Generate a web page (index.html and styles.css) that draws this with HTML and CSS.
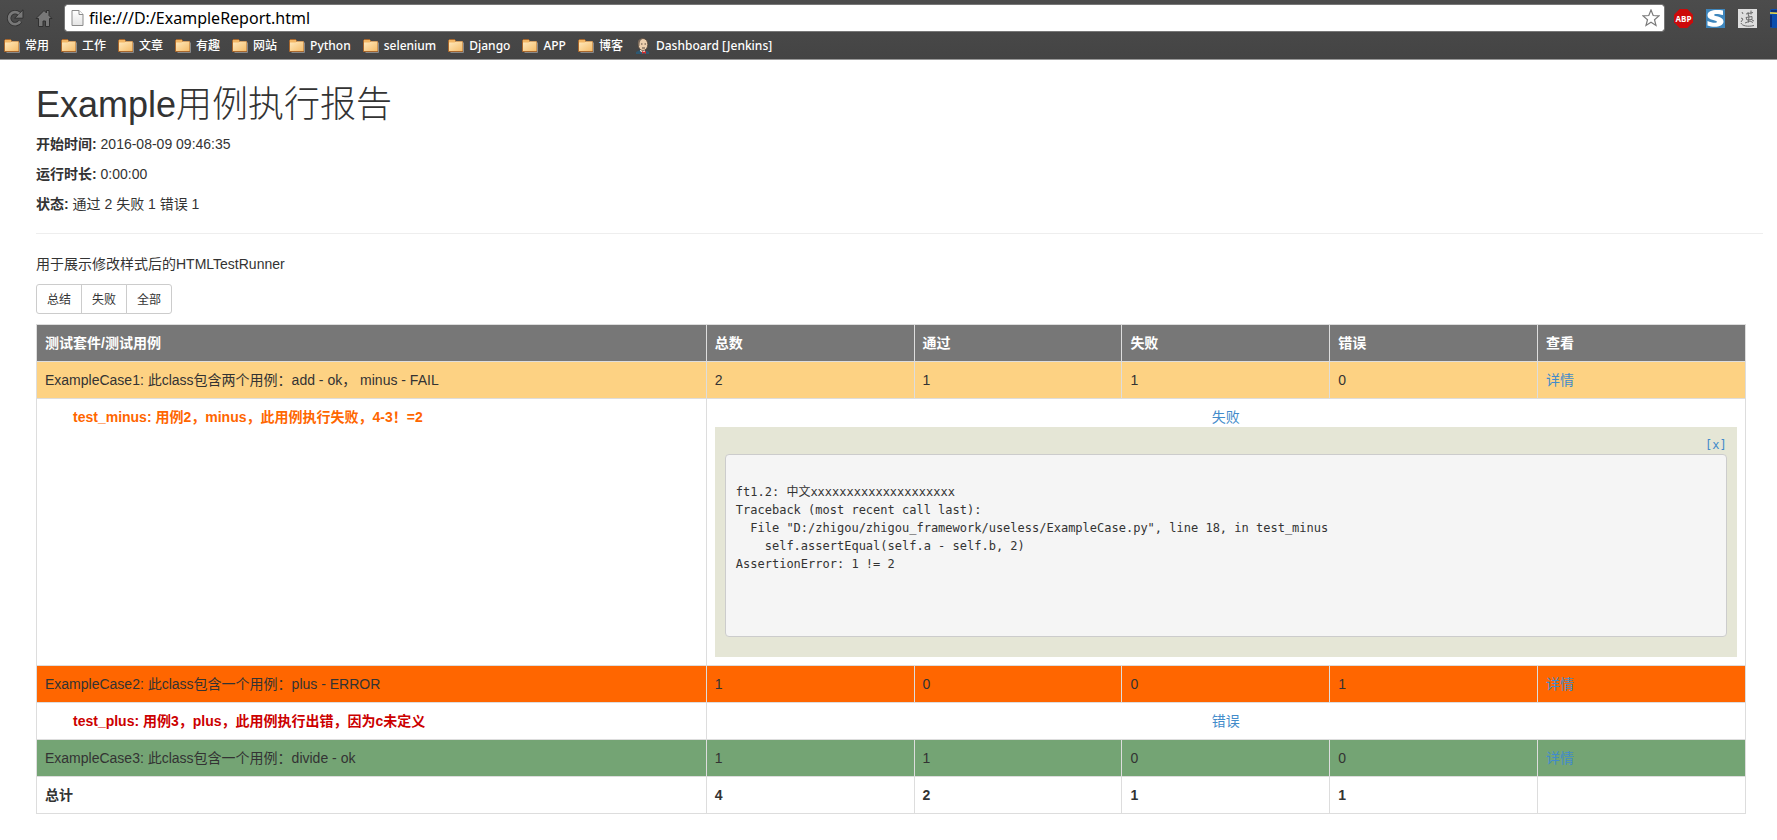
FILE: index.html
```html
<!DOCTYPE html>
<html lang="zh-CN">
<head>
<meta charset="utf-8">
<title>Example用例执行报告</title>
<link rel="stylesheet" href="styles.css">
</head>
<body>
<svg class="defs" width="0" height="0" aria-hidden="true">
  <defs>
    <linearGradient id="folderFill" x1="0" y1="0" x2="1" y2="1">
      <stop offset="0" stop-color="#ffe9bd"/><stop offset="1" stop-color="#f5bd6a"/>
    </linearGradient>
    <linearGradient id="pageFill" x1="0" y1="0" x2="0" y2="1">
      <stop offset="0" stop-color="#fff"/><stop offset="1" stop-color="#e4e4e4"/>
    </linearGradient>
    <symbol id="folder" viewBox="0 0 16 16">
      <path d="M2.500 14.500h13v-10" fill="none" stroke="#8a8a8a"/>
      <path d="M.5 3.500v-1l1-1h5l1 1v1h7v10H.5z" fill="#f3b765" stroke="#a8672c"/>
      <path d="M1 4.500h5.500l1.200-1H14.500v9.500H1z" fill="url(#folderFill)"/>
    </symbol>
  </defs>
</svg>
<header class="browser">
  <div class="toolbar">
    <button class="tool" type="button" aria-label="刷新">
      <svg width="18" height="18" viewBox="0 0 18 18"><path d="M14.200 12.200A6 6 0 1 1 13.200 4.800" fill="none" stroke="#303030" stroke-width="4.400"/><path d="M17 .8v8.400H8.600z" fill="#787878" stroke="#303030"/><path d="M14.200 12.200A6 6 0 1 1 13.200 4.800" fill="none" stroke="#787878" stroke-width="2.800"/></svg>
    </button>
    <button class="tool" type="button" aria-label="主页">
      <svg width="18" height="18" viewBox="0 0 18 18"><path d="M1 9.500 9 1.500l2.500 2.500V1.500H14v5l3 3H14.500V17.500h-4V12H8v5.500H3.500V9.500z" fill="#787878" stroke="#303030"/></svg>
    </button>
    <div class="address">
      <svg width="13" height="16" viewBox="0 0 13 16"><path d="M1 .5h7l4 4v11H1z" fill="url(#pageFill)" stroke="#8b8b8b"/><path d="M8 .5v4h4" fill="#fff" stroke="#8b8b8b"/></svg>
      <input class="url" type="text" aria-label="地址" value="file:///D:/ExampleReport.html">
      <button class="star" type="button" aria-label="收藏">
        <svg width="18" height="18" viewBox="0 0 18 18"><path d="M9 1l2.200 5.500 5.800.4-4.500 3.800 1.500 5.800L9 13.300 4 16.500l1.500-5.800L1 6.900l5.800-.4z" fill="#fff" stroke="#7a7a7a" stroke-width="1.200"/></svg>
      </button>
    </div>
    <div class="extensions">
      <button class="ext" type="button" aria-label="Adblock Plus"><svg width="19" height="19" viewBox="0 0 19 19"><path d="M5.700 0h7.600L19 5.700v7.600L13.300 19H5.700L0 13.300V5.700z" fill="#cc0a0a"/><text class="abp" x="9.500" y="12.500" text-anchor="middle">ABP</text></svg></button>
      <button class="ext" type="button" aria-label="S"><svg width="19" height="19" viewBox="0 0 19 19"><path d="M0 0h19v19H0z" fill="#3e86bd"/><path d="M17 1.500V6C12 4.500 8 4.500 8 6c0 1.500 9.500 1 9.500 6.500C17.500 18 8 19 1.500 16.500V12c4 2 9.500 2.500 9.500.8C11 11 1.500 11.500 1.500 6.500 1.500 1 9 .5 17 1.500z" fill="#fff"/></svg></button>
      <button class="ext" type="button" aria-label="扩展"><svg width="19" height="19" viewBox="0 0 19 19"><path d="M0 0h19v19H0z" fill="#dedede"/><path d="M4 3l1 2M3 9l2 1-2 3M8 5l7-1.500M10 3l.5 4M13 1.500v4M8 8.500l6-1v3l-5 .5zM11 6.500l-.5 7M7 14l5-2 3 1.500M3 14c1 3 7 4 13 2.500M14 11l2 1" fill="none" stroke="#6c6c6c"/></svg></button>
      <button class="ext" type="button" aria-label="更多扩展"><svg width="19" height="19" viewBox="0 0 19 19"><rect width="19" height="19" rx="2" fill="#0b4dad"/><path d="M1 1h18v3H1z" fill="#0a2e78"/><path d="M0 4q4-.5 19 1.500" fill="none" stroke="#f7e34a" stroke-width="1.500"/><path d="M1 6v12" stroke="#0a2e78" stroke-width="2"/></svg></button>
    </div>
  </div>
  <nav class="bookmarks" aria-label="书签">
    <a href="#"><svg width="16" height="16"><use href="#folder"/></svg>常用</a>
    <a href="#"><svg width="16" height="16"><use href="#folder"/></svg>工作</a>
    <a href="#"><svg width="16" height="16"><use href="#folder"/></svg>文章</a>
    <a href="#"><svg width="16" height="16"><use href="#folder"/></svg>有趣</a>
    <a href="#"><svg width="16" height="16"><use href="#folder"/></svg>网站</a>
    <a href="#"><svg width="16" height="16"><use href="#folder"/></svg>Python</a>
    <a href="#"><svg width="16" height="16"><use href="#folder"/></svg>selenium</a>
    <a href="#"><svg width="16" height="16"><use href="#folder"/></svg>Django</a>
    <a href="#"><svg width="16" height="16"><use href="#folder"/></svg>APP</a>
    <a href="#"><svg width="16" height="16"><use href="#folder"/></svg>博客</a>
    <a href="#"><svg width="16" height="16" viewBox="0 0 16 16"><path d="M1 16v-2l4-2 7 1 2 1v2z" fill="#2d5872"/><path d="M5 10h5v4l-2 1-3-2z" fill="#f3ead8"/><ellipse cx="8" cy="6.500" rx="4.800" ry="6" fill="#eccfae" stroke="#54453a" stroke-width=".8"/><path d="M3.200 7C2 2 5 0 8 .5 5 2 4.500 4 4.500 8z" fill="#7b6a5b"/><path d="M6 6h1.500M9.500 6H11M7 10h3" stroke="#54453a"/><path d="M7 13l2 1 2-1v3l-2-1-2 1z" fill="#d02c2c"/></svg>Dashboard [Jenkins]</a>
  </nav>
</header>
<main class="report">
  <h1>Example<span class="thin">用例执行报告</span></h1>
  <p><strong>开始时间:</strong> 2016-08-09 09:46:35</p>
  <p><strong>运行时长:</strong> 0:00:00</p>
  <p><strong>状态:</strong> 通过 2 失败 1 错误 1</p>
  <hr>
  <p>用于展示修改样式后的HTMLTestRunner</p>
  <div class="btn-group">
    <button type="button">总结</button>
    <button type="button">失败</button>
    <button type="button">全部</button>
  </div>
  <table class="results">
    <colgroup><col class="col-name"><col span="5"></colgroup>
    <thead>
      <tr><th>测试套件/测试用例</th><th>总数</th><th>通过</th><th>失败</th><th>错误</th><th>查看</th></tr>
    </thead>
    <tbody>
      <tr class="suite-fail"><td>ExampleCase1: 此class包含两个用例：add - ok， minus - FAIL</td><td>2</td><td>1</td><td>1</td><td>0</td><td><a href="#">详情</a></td></tr>
      <tr>
        <td class="case case-fail">test_minus: 用例2，minus，此用例执行失败，4-3！=2</td>
        <td colspan="5" class="status">
          <a href="#">失败</a>
          <div class="popup">
            <div class="close"><a href="#">[x]</a></div>
<pre>

ft1.2: 中文xxxxxxxxxxxxxxxxxxxx
Traceback (most recent call last):
  File "D:/zhigou/zhigou_framework/useless/ExampleCase.py", line 18, in test_minus
    self.assertEqual(self.a - self.b, 2)
AssertionError: 1 != 2



</pre>
          </div>
        </td>
      </tr>
      <tr class="suite-error"><td>ExampleCase2: 此class包含一个用例：plus - ERROR</td><td>1</td><td>0</td><td>0</td><td>1</td><td><a href="#">详情</a></td></tr>
      <tr><td class="case case-error">test_plus: 用例3，plus，此用例执行出错，因为c未定义</td><td colspan="5" class="status"><a href="#">错误</a></td></tr>
      <tr class="suite-pass"><td>ExampleCase3: 此class包含一个用例：divide - ok</td><td>1</td><td>1</td><td>0</td><td>0</td><td><a href="#">详情</a></td></tr>
    </tbody>
    <tfoot>
      <tr><td>总计</td><td>4</td><td>2</td><td>1</td><td>1</td><td></td></tr>
    </tfoot>
  </table>
</main>
</body>
</html>
```
FILE: styles.css
```css
* { box-sizing: border-box; }

body {
  margin: 0;
  background: #fff;
  color: #333;
  font: 14px/20px "Liberation Sans", "Noto Sans CJK SC", sans-serif;
}

a { color: #428bca; text-decoration: none; }
button, input { font: inherit; }
.defs { position: absolute; }

/* Browser frame */
.browser {
  height: 60px;
  padding-top: 4px;
  background: linear-gradient(#4c4c4c, #444);
  border-bottom: 1px solid #999;
  overflow: hidden;
}
.toolbar { display: flex; align-items: center; padding-left: 6px; }
.tool, .star, .ext {
  display: flex;
  flex: none;
  padding: 0;
  border: 0;
  background: none;
}
.tool { margin-right: 11px; }
.address {
  display: flex;
  flex: 1;
  align-items: center;
  height: 28px;
  margin-right: 9px;
  padding: 0 4px 0 6px;
  border: 1px solid #222;
  border-radius: 3px;
  outline: 1px solid #777;
  outline-offset: -1px;
  background: #fff;
}
.url {
  flex: 1;
  min-width: 0;
  padding: 0 0 0 5px;
  border: 0;
  outline: 0;
  background: none;
  color: #000;
  font: 16px/24px "Noto Sans", sans-serif;
}
.extensions { display: flex; gap: 13px; width: 103px; overflow: hidden; }
.abp { fill: #fff; font: bold 8px "Open Sans", sans-serif; }

.bookmarks { display: flex; gap: 12px; padding: 4px; }
.bookmarks a {
  display: flex;
  align-items: center;
  gap: 5px;
  color: #fff;
  font: 500 12px/20px "Noto Sans", "Noto Sans CJK SC", sans-serif;
  white-space: nowrap;
}

/* Report */
.report { padding: 25px 14px 20px 36px; }
h1 { margin: 0 0 9px; font-size: 36px; font-weight: 400; line-height: 40px; }
.thin { font-weight: 300; }
p { margin: 0 0 10px; }
hr { margin: 19px 0 20px; border: 0; border-top: 1px solid #eee; }

.btn-group { display: flex; margin-bottom: 10px; }
.btn-group button {
  height: 30px;
  padding: 6px 10px 4px;
  border: 1px solid #ccc;
  background: #fff;
  color: #333;
  font-size: 12px;
  line-height: 18px;
}
.btn-group button + button { margin-left: -1px; }
.btn-group button:first-child { border-radius: 3px 0 0 3px; }
.btn-group button:last-child { border-radius: 0 3px 3px 0; }

.results { width: 99%; border-collapse: collapse; table-layout: fixed; }
.col-name { width: 39.2%; }
th, td {
  padding: 8px;
  border: 1px solid #ddd;
  text-align: left;
  vertical-align: top;
}
th { background: #777; color: #fff; }
.suite-fail { background: #fdd283; }
.suite-error { background: #f60; }
.suite-pass { background: #74a474; }
.case { padding-left: 36px; font-weight: bold; }
.case-fail { color: #f60; }
.case-error { color: #c00; }
.status { text-align: center; }
tfoot { font-weight: bold; }

.popup {
  padding: 10px;
  background: #e5e6d6;
  font-family: "DejaVu Sans Mono", "Noto Sans CJK SC", monospace;
  font-size: 12px;
  text-align: left;
}
.close { line-height: 17px; text-align: right; }
pre {
  margin: 0 0 10px;
  padding: 10px 10px 9px;
  border: 1px solid #ccc;
  border-radius: 4px;
  background: #f5f5f5;
  font: inherit;
  line-height: 18px;
  overflow: auto;
}
```
